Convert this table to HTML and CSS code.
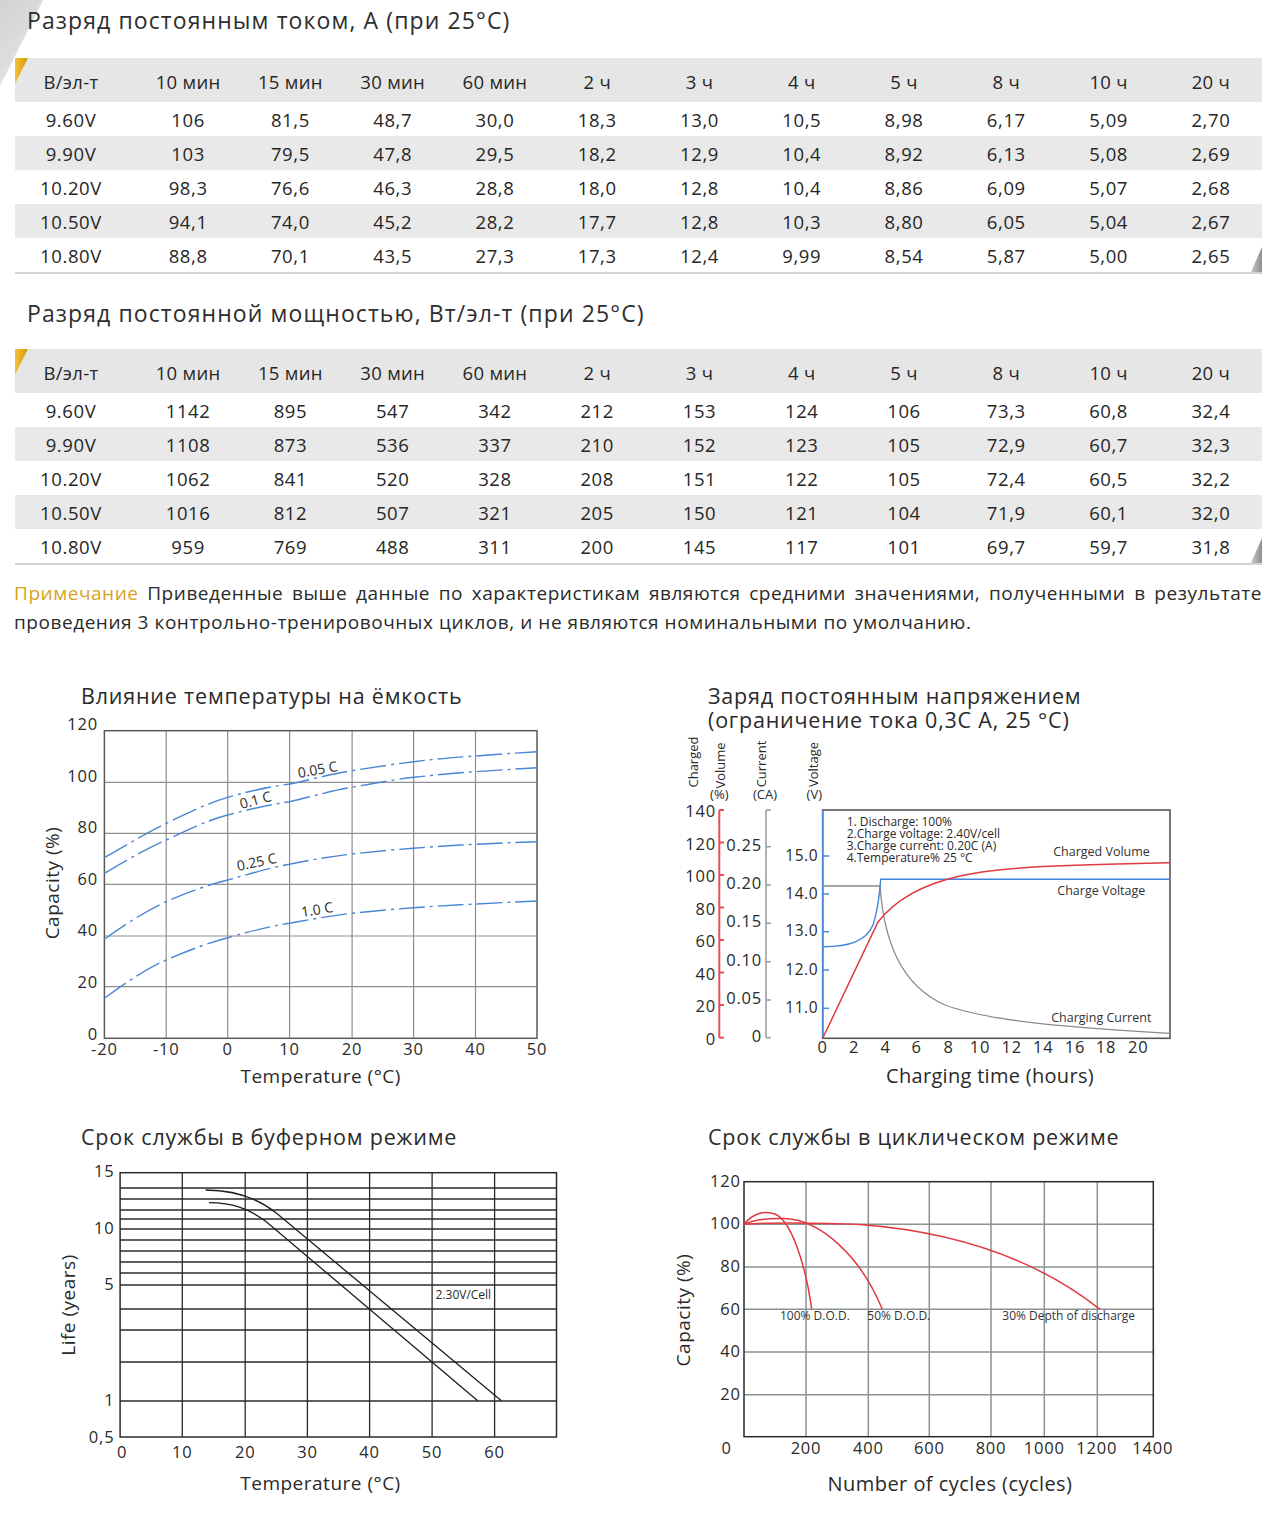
FILE: index.html
```html
<!DOCTYPE html>
<html lang="ru">
<head>
<meta charset="utf-8">
<title>Характеристики разряда</title>
<link rel="stylesheet" href="styles.css">
</head>
<body>
<div class="page">
  <div class="corner"></div>

  <section class="spec">
    <h2 class="spec-title first">Разряд постоянным током, А (при 25°С)</h2>
    <div class="table">
      <div class="row head"><span>В/эл-т</span><span>10 мин</span><span>15 мин</span><span>30 мин</span><span>60 мин</span><span>2 ч</span><span>3 ч</span><span>4 ч</span><span>5 ч</span><span>8 ч</span><span>10 ч</span><span>20 ч</span></div>
      <div class="row"><span>9.60V</span><span>106</span><span>81,5</span><span>48,7</span><span>30,0</span><span>18,3</span><span>13,0</span><span>10,5</span><span>8,98</span><span>6,17</span><span>5,09</span><span>2,70</span></div>
      <div class="row alt"><span>9.90V</span><span>103</span><span>79,5</span><span>47,8</span><span>29,5</span><span>18,2</span><span>12,9</span><span>10,4</span><span>8,92</span><span>6,13</span><span>5,08</span><span>2,69</span></div>
      <div class="row"><span>10.20V</span><span>98,3</span><span>76,6</span><span>46,3</span><span>28,8</span><span>18,0</span><span>12,8</span><span>10,4</span><span>8,86</span><span>6,09</span><span>5,07</span><span>2,68</span></div>
      <div class="row alt"><span>10.50V</span><span>94,1</span><span>74,0</span><span>45,2</span><span>28,2</span><span>17,7</span><span>12,8</span><span>10,3</span><span>8,80</span><span>6,05</span><span>5,04</span><span>2,67</span></div>
      <div class="row"><span>10.80V</span><span>88,8</span><span>70,1</span><span>43,5</span><span>27,3</span><span>17,3</span><span>12,4</span><span>9,99</span><span>8,54</span><span>5,87</span><span>5,00</span><span>2,65</span></div>
    </div>

    <h2 class="spec-title second">Разряд постоянной мощностью, Вт/эл-т (при 25°С)</h2>
    <div class="table">
      <div class="row head"><span>В/эл-т</span><span>10 мин</span><span>15 мин</span><span>30 мин</span><span>60 мин</span><span>2 ч</span><span>3 ч</span><span>4 ч</span><span>5 ч</span><span>8 ч</span><span>10 ч</span><span>20 ч</span></div>
      <div class="row"><span>9.60V</span><span>1142</span><span>895</span><span>547</span><span>342</span><span>212</span><span>153</span><span>124</span><span>106</span><span>73,3</span><span>60,8</span><span>32,4</span></div>
      <div class="row alt"><span>9.90V</span><span>1108</span><span>873</span><span>536</span><span>337</span><span>210</span><span>152</span><span>123</span><span>105</span><span>72,9</span><span>60,7</span><span>32,3</span></div>
      <div class="row"><span>10.20V</span><span>1062</span><span>841</span><span>520</span><span>328</span><span>208</span><span>151</span><span>122</span><span>105</span><span>72,4</span><span>60,5</span><span>32,2</span></div>
      <div class="row alt"><span>10.50V</span><span>1016</span><span>812</span><span>507</span><span>321</span><span>205</span><span>150</span><span>121</span><span>104</span><span>71,9</span><span>60,1</span><span>32,0</span></div>
      <div class="row"><span>10.80V</span><span>959</span><span>769</span><span>488</span><span>311</span><span>200</span><span>145</span><span>117</span><span>101</span><span>69,7</span><span>59,7</span><span>31,8</span></div>
    </div>
  </section>

  <p class="note"><span class="note-label">Примечание</span> Приведенные выше данные по характеристикам являются средними значениями, полученными в результате проведения 3 контрольно-тренировочных циклов, и не являются номинальными по умолчанию.</p>

  <section class="charts">
    <figure class="chart left top">
      <h3 class="chart-title">Влияние температуры на ёмкость</h3>
      <svg class="plot" width="640" height="411" viewBox="0 709 640 411">
        <g class="grid-grey">
          <line x1="166.2" y1="730.7" x2="166.2" y2="1038.3"/>
          <line x1="227.7" y1="730.7" x2="227.7" y2="1038.3"/>
          <line x1="289.6" y1="730.7" x2="289.6" y2="1038.3"/>
          <line x1="352.1" y1="730.7" x2="352.1" y2="1038.3"/>
          <line x1="413.6" y1="730.7" x2="413.6" y2="1038.3"/>
          <line x1="475.5" y1="730.7" x2="475.5" y2="1038.3"/>
          <line x1="104.4" y1="782.3" x2="537" y2="782.3"/>
          <line x1="104.4" y1="833.3" x2="537" y2="833.3"/>
          <line x1="104.4" y1="884.3" x2="537" y2="884.3"/>
          <line x1="104.4" y1="936" x2="537" y2="936"/>
          <line x1="104.4" y1="986.7" x2="537" y2="986.7"/>
        </g>
        <rect class="frame-grey" x="104.4" y="730.7" width="432.6" height="307.6"/>
        <g class="num yl">
          <text x="98" y="725">120</text>
          <text x="98" y="777">100</text>
          <text x="98" y="828">80</text>
          <text x="98" y="880">60</text>
          <text x="98" y="931">40</text>
          <text x="98" y="983">20</text>
          <text x="98" y="1035">0</text>
        </g>
        <g class="num xl">
          <text x="104.4" y="1050">-20</text>
          <text x="166.2" y="1050">-10</text>
          <text x="227.7" y="1050">0</text>
          <text x="289.6" y="1050">10</text>
          <text x="352.1" y="1050">20</text>
          <text x="413.6" y="1050">30</text>
          <text x="475.5" y="1050">40</text>
          <text x="537" y="1050">50</text>
        </g>
        <text class="axis-title" x="320.7" y="1078">Temperature (°C)</text>
        <text class="axis-title" x="51.7" y="883" transform="rotate(-90 51.7 883)">Capacity (%)</text>
        <g class="dashdot">
          <path d="M104.4 857.7 C130 843, 148 832, 166.2 823.3 C190 812, 208 803, 227.7 797.3 C250 791, 268 787, 289.6 784 C310 780, 330 774, 352.1 770.7 C375 767, 395 764, 413.6 761.7 C435 759, 455 757.5, 475.5 756 C495 754.5, 515 753, 537 751.7"/>
          <path d="M104.4 873.3 C130 858, 148 848, 166.2 840 C190 829, 208 820, 227.7 815 C250 809, 268 805, 289.6 801.7 C310 797, 330 791, 352.1 787.3 C375 783, 395 779.5, 413.6 777.3 C435 775, 455 773, 475.5 771.7 C495 770.5, 515 769, 537 767.7"/>
          <path d="M104.4 939.3 C128 922, 148 910, 166.2 901.7 C188 892, 208 885, 227.7 880 C250 874, 268 868, 289.6 864.3 C310 860, 330 856.5, 352.1 854 C375 851.5, 395 849.5, 413.6 848.3 C435 846.5, 455 845.2, 475.5 844.3 C495 843.3, 515 842.4, 537 841.7"/>
          <path d="M104.4 998.3 C128 981, 148 968, 166.2 960 C188 950.5, 208 943, 227.7 937.7 C250 931.5, 268 926.5, 289.6 923.3 C310 919.5, 330 915.7, 352.1 913.3 C375 911, 395 909, 413.6 907.7 C435 906.2, 455 905, 475.5 904 C495 903, 515 901.9, 537 901"/>
        </g>
        <g class="curve-label">
          <text x="298.7" y="778" transform="rotate(-10 298.7 778)">0.05 C</text>
          <text x="241.3" y="809" transform="rotate(-15 241.3 809)">0.1 C</text>
          <text x="238" y="871" transform="rotate(-12 238 871)">0.25 C</text>
          <text x="302" y="917" transform="rotate(-9 302 917)">1.0 C</text>
        </g>
      </svg>
    </figure>

    <figure class="chart right top">
      <h3 class="chart-title">Заряд постоянным напряжением<br>(ограничение тока 0,3С А, 25 °С)</h3>
      <svg class="plot" width="640" height="387" viewBox="640 733 640 387">
        <g class="small-axis">
          <text x="693" y="762" transform="rotate(-90 693 762)">Charged</text>
          <text x="719.7" y="765.5" transform="rotate(-90 719.7 765.5)">Volume</text>
          <text x="761.3" y="764" transform="rotate(-90 761.3 764)">Current</text>
          <text x="813" y="764.5" transform="rotate(-90 813 764.5)">Voltage</text>
          <text x="719.3" y="795">(%)</text>
          <text x="765" y="795">(CA)</text>
          <text x="814.3" y="795">(V)</text>
        </g>
        <g class="axis-red">
          <line x1="719.3" y1="810" x2="719.3" y2="1037.7"/>
          <line x1="719.3" y1="810" x2="724" y2="810"/>
          <line x1="719.3" y1="842.5" x2="724" y2="842.5"/>
          <line x1="719.3" y1="875" x2="724" y2="875"/>
          <line x1="719.3" y1="907.5" x2="724" y2="907.5"/>
          <line x1="719.3" y1="940" x2="724" y2="940"/>
          <line x1="719.3" y1="972.5" x2="724" y2="972.5"/>
          <line x1="719.3" y1="1005" x2="724" y2="1005"/>
          <line x1="719.3" y1="1037.7" x2="724" y2="1037.7"/>
        </g>
        <g class="num yl">
          <text x="716" y="812">140</text>
          <text x="716" y="844.5">120</text>
          <text x="716" y="877">100</text>
          <text x="716" y="909.5">80</text>
          <text x="716" y="942">60</text>
          <text x="716" y="974.5">40</text>
          <text x="716" y="1007">20</text>
          <text x="716" y="1039.7">0</text>
        </g>
        <g class="axis-grey">
          <line x1="766" y1="810" x2="766" y2="1037.7"/>
          <line x1="766" y1="810" x2="771" y2="810"/>
          <line x1="766" y1="846.7" x2="771" y2="846.7"/>
          <line x1="766" y1="885" x2="771" y2="885"/>
          <line x1="766" y1="923.3" x2="771" y2="923.3"/>
          <line x1="766" y1="961.7" x2="771" y2="961.7"/>
          <line x1="766" y1="1000" x2="771" y2="1000"/>
          <line x1="766" y1="1037.7" x2="771" y2="1037.7"/>
        </g>
        <g class="num yl">
          <text x="762" y="845.7">0.25</text>
          <text x="762" y="884">0.20</text>
          <text x="762" y="922.3">0.15</text>
          <text x="762" y="960.7">0.10</text>
          <text x="762" y="999">0.05</text>
          <text x="762" y="1036.7">0</text>
        </g>
        <rect class="frame-dark" x="822.7" y="810" width="347.3" height="228.3"/>
        <g class="axis-blue">
          <line x1="822.7" y1="810" x2="822.7" y2="1038.3"/>
          <line x1="822.7" y1="856" x2="829" y2="856"/>
          <line x1="822.7" y1="894" x2="829" y2="894"/>
          <line x1="822.7" y1="931.7" x2="829" y2="931.7"/>
          <line x1="822.7" y1="970" x2="829" y2="970"/>
          <line x1="822.7" y1="1008.3" x2="829" y2="1008.3"/>
        </g>
        <g class="num yl sm">
          <text x="818" y="856">15.0</text>
          <text x="818" y="894">14.0</text>
          <text x="818" y="931.7">13.0</text>
          <text x="818" y="970">12.0</text>
          <text x="818" y="1008.3">11.0</text>
        </g>
        <g class="num xl">
          <text x="822.7" y="1048.3">0</text>
          <text x="854" y="1048.3">2</text>
          <text x="885.7" y="1048.3">4</text>
          <text x="916.7" y="1048.3">6</text>
          <text x="948.7" y="1048.3">8</text>
          <text x="980" y="1048.3">10</text>
          <text x="1011.7" y="1048.3">12</text>
          <text x="1043.3" y="1048.3">14</text>
          <text x="1075" y="1048.3">16</text>
          <text x="1106" y="1048.3">18</text>
          <text x="1138.3" y="1048.3">20</text>
        </g>
        <text class="axis-title lg" x="990" y="1077.3">Charging time (hours)</text>
        <g class="note-lines">
          <text x="846.7" y="822.7">1. Discharge: 100%</text>
          <text x="846.7" y="834.5">2.Charge voltage: 2.40V/cell</text>
          <text x="846.7" y="846.3">3.Charge current: 0.20C (A)</text>
          <text x="846.7" y="858.3">4.Temperature% 25 °C</text>
        </g>
        <g class="series-label">
          <text x="1101.5" y="852.7">Charged Volume</text>
          <text x="1101.3" y="892">Charge Voltage</text>
          <text x="1101.3" y="1018.3">Charging Current</text>
        </g>
        <path class="line-grey" d="M822.7 886 L880 886 C884 940, 900 985, 945 1005 C990 1022, 1080 1028, 1170 1033.3"/>
        <path class="line-blue" d="M822.7 946.7 C850 946.5, 866 941, 873 925 C877 913, 879.5 896, 880.7 879.3 L1170 879.3"/>
        <path class="line-red" d="M822.7 1038.3 L878 922 C895 900, 920 885, 960 876 C1000 867, 1060 865, 1170 862.7"/>
      </svg>
    </figure>

    <figure class="chart left bottom">
      <h3 class="chart-title">Срок службы в буферном режиме</h3>
      <svg class="plot" width="640" height="360" viewBox="0 1150 640 360">
        <g class="grid-black">
          <line x1="182.3" y1="1172.7" x2="182.3" y2="1437"/>
          <line x1="245.2" y1="1172.7" x2="245.2" y2="1437"/>
          <line x1="307.4" y1="1172.7" x2="307.4" y2="1437"/>
          <line x1="369.6" y1="1172.7" x2="369.6" y2="1437"/>
          <line x1="432.1" y1="1172.7" x2="432.1" y2="1437"/>
          <line x1="494.6" y1="1172.7" x2="494.6" y2="1437"/>
          <line x1="120.1" y1="1188" x2="556.5" y2="1188"/>
          <line x1="120.1" y1="1199" x2="556.5" y2="1199"/>
          <line x1="120.1" y1="1210" x2="556.5" y2="1210"/>
          <line x1="120.1" y1="1219" x2="556.5" y2="1219"/>
          <line x1="120.1" y1="1229" x2="556.5" y2="1229"/>
          <line x1="120.1" y1="1240" x2="556.5" y2="1240"/>
          <line x1="120.1" y1="1251" x2="556.5" y2="1251"/>
          <line x1="120.1" y1="1262" x2="556.5" y2="1262"/>
          <line x1="120.1" y1="1273" x2="556.5" y2="1273"/>
          <line x1="120.1" y1="1285" x2="556.5" y2="1285"/>
          <line x1="120.1" y1="1309" x2="556.5" y2="1309"/>
          <line x1="120.1" y1="1330" x2="556.5" y2="1330"/>
          <line x1="120.1" y1="1362" x2="556.5" y2="1362"/>
          <line x1="120.1" y1="1401" x2="556.5" y2="1401"/>
        </g>
        <rect class="frame-black" x="120.1" y="1172.7" width="436.4" height="264.3"/>
        <g class="num yl">
          <text x="114.4" y="1172.3">15</text>
          <text x="114.4" y="1229.3">10</text>
          <text x="114.4" y="1285">5</text>
          <text x="114.4" y="1400.7">1</text>
          <text x="114.4" y="1437.5">0,5</text>
        </g>
        <g class="num xl">
          <text x="122" y="1453">0</text>
          <text x="182.3" y="1453">10</text>
          <text x="245.2" y="1453">20</text>
          <text x="307.4" y="1453">30</text>
          <text x="369.6" y="1453">40</text>
          <text x="432.1" y="1453">50</text>
          <text x="494.6" y="1453">60</text>
        </g>
        <text class="axis-title" x="320.5" y="1485">Temperature (°C)</text>
        <text class="axis-title" x="68.4" y="1305" transform="rotate(-90 68.4 1305)">Life (years)</text>
        <path class="line-black" d="M205.6 1190 C232 1190, 255 1196, 276.6 1213.3 L501.4 1400.7"/>
        <path class="line-black" d="M209 1202.7 C232 1203, 248 1208, 266 1221.5 L477.7 1400.7"/>
        <text class="chart-note" x="435.5" y="1296">2.30V/Cell</text>
      </svg>
    </figure>

    <figure class="chart right bottom">
      <h3 class="chart-title">Срок службы в циклическом режиме</h3>
      <svg class="plot" width="640" height="360" viewBox="640 1150 640 360">
        <g class="grid-cool">
          <line x1="806" y1="1181.7" x2="806" y2="1436.7"/>
          <line x1="868.3" y1="1181.7" x2="868.3" y2="1436.7"/>
          <line x1="929.3" y1="1181.7" x2="929.3" y2="1436.7"/>
          <line x1="991" y1="1181.7" x2="991" y2="1436.7"/>
          <line x1="1044.3" y1="1181.7" x2="1044.3" y2="1436.7"/>
          <line x1="1097.3" y1="1181.7" x2="1097.3" y2="1436.7"/>
          <line x1="744" y1="1224.3" x2="1153.3" y2="1224.3"/>
          <line x1="744" y1="1267" x2="1153.3" y2="1267"/>
          <line x1="744" y1="1309.3" x2="1153.3" y2="1309.3"/>
          <line x1="744" y1="1352" x2="1153.3" y2="1352"/>
          <line x1="744" y1="1394.7" x2="1153.3" y2="1394.7"/>
        </g>
        <rect class="frame-black" x="744" y="1181.7" width="409.3" height="255"/>
        <g class="num yl">
          <text x="740.7" y="1181.7">120</text>
          <text x="740.7" y="1224.3">100</text>
          <text x="740.7" y="1267.3">80</text>
          <text x="740.7" y="1310">60</text>
          <text x="740.7" y="1352.3">40</text>
          <text x="740.7" y="1395">20</text>
        </g>
        <g class="num xl">
          <text x="726.7" y="1449">0</text>
          <text x="806" y="1449">200</text>
          <text x="868.3" y="1449">400</text>
          <text x="929.3" y="1449">600</text>
          <text x="991" y="1449">800</text>
          <text x="1044.3" y="1449">1000</text>
          <text x="1096.7" y="1449">1200</text>
          <text x="1152.7" y="1449">1400</text>
        </g>
        <text class="axis-title lg wide" x="950" y="1485">Number of cycles (cycles)</text>
        <text class="axis-title" x="683" y="1310" transform="rotate(-90 683 1310)">Capacity (%)</text>
        <path class="line-red" d="M744 1224.3 C752 1214, 764 1210, 775 1214 C790 1220, 805 1260, 811.7 1309.3"/>
        <path class="line-red" d="M744 1224.3 C755 1219, 768 1218, 785 1218.5 C820 1220, 860 1255, 882.3 1309.3"/>
        <path class="line-red" d="M744 1224.3 C760 1222.5, 820 1222.5, 860 1224.5 C960 1232, 1040 1262, 1100 1309.3"/>
        <g class="chart-note">
          <text x="780" y="1317">100% D.O.D.</text>
          <text x="867.3" y="1317">50% D.O.D.</text>
          <text x="1002.3" y="1317">30% Depth of discharge</text>
        </g>
      </svg>
    </figure>
  </section>
</div>
</body>
</html>
```

FILE: styles.css
```css
* { box-sizing: border-box; }

html, body {
  margin: 0;
  padding: 0;
  background: #ffffff;
}

body {
  width: 1280px;
  font-family: "Open Sans", "Noto Sans", "DejaVu Sans", sans-serif;
  color: #2a2a2a;
}

.page {
  position: relative;
  width: 1280px;
  min-height: 1524px;
}

.corner {
  position: absolute;
  left: 0;
  top: 0;
  width: 43px;
  height: 86px;
  background: linear-gradient(135deg, #d2d2d2, #e8e8e8);
  clip-path: polygon(0 0, 100% 0, 0 100%);
}

/* ---------- tables ---------- */
.spec {
  position: relative;
  padding: 0 18px 0 15px;
}

.spec-title {
  margin: 0;
  padding-left: 12px;
  font-size: 23px;
  font-weight: 400;
  line-height: 40px;
  color: #2e2e2e;
  letter-spacing: 1.1px;
}

.spec-title.first { margin-bottom: 18px; }
.spec-title.second { margin: 19px 0 16px; }

.table {
  position: relative;
  border-bottom: 2px solid #d4d4d4;
}

.table::before {
  content: "";
  position: absolute;
  left: 0;
  top: 0;
  width: 13px;
  height: 26px;
  background: linear-gradient(90deg, #f2c23a, #d59b06);
  clip-path: polygon(0 0, 100% 0, 0 100%);
}

.table::after {
  content: "";
  position: absolute;
  right: 0;
  bottom: 0;
  width: 11px;
  height: 25px;
  background: linear-gradient(90deg, #c8c8c8, #8f8f8f);
  clip-path: polygon(100% 0, 100% 100%, 0 100%);
}

.row {
  display: grid;
  grid-template-columns: 122px repeat(11, 1fr);
  align-items: center;
  height: 34px;
  font-size: 18.5px;
  letter-spacing: 0.6px;
  text-align: center;
  color: #262626;
}

.row > span:first-child { padding-right: 10px; }

.row.head {
  height: 44px;
  padding-top: 2px;
  background: #e6e6e6;
  letter-spacing: 0.3px;
}

.row.alt { background: #e9e9e9; }

/* ---------- note ---------- */
.note {
  margin: 14px 18px 0 14px;
  font-size: 19px;
  line-height: 29px;
  text-align: justify;
  color: #2a2a2a;
  letter-spacing: 0.55px;
}

.note-label { color: #d9a21e; }

/* ---------- charts ---------- */
.charts {
  display: grid;
  grid-template-columns: 640px 640px;
  margin-top: 43px;
}

.chart { margin: 0; }

.chart-title {
  margin: 0;
  font-size: 21.5px;
  font-weight: 400;
  line-height: 24px;
  color: #2a2a2a;
  letter-spacing: 0.8px;
  padding-top: 4px;
  padding-bottom: 1px;
}

.chart.left .chart-title { padding-left: 81px; }
.chart.right .chart-title { padding-left: 68px; }
.chart.bottom .chart-title { padding-top: 5px; padding-bottom: 1px; }

.plot { display: block; }

.plot text { fill: #2a2a2a; }
.plot text:not([transform]) { transform: translateY(-0.09em); }

.num { font-size: 16.5px; letter-spacing: 0.8px; }
.num.sm { font-size: 15.5px; letter-spacing: 0.5px; }
.yl text { text-anchor: end; dominant-baseline: central; }
.xl text { text-anchor: middle; dominant-baseline: central; }

.axis-title {
  font-size: 19px;
  letter-spacing: 0.5px;
  text-anchor: middle;
  dominant-baseline: central;
}
.axis-title.lg { font-size: 20px; letter-spacing: 0.3px; }
.axis-title.wide { letter-spacing: 0.45px; }

.grid-grey line { stroke: #8e8e8e; stroke-width: 1.2; }
.frame-grey { fill: none; stroke: #5a5a5a; stroke-width: 1.5; }

.dashdot path {
  fill: none;
  stroke: #4a86d6;
  stroke-width: 1.4;
  stroke-dasharray: 26 5 3 5;
}

.curve-label text { font-size: 14px; }

.small-axis text {
  font-size: 13px;
  text-anchor: middle;
  dominant-baseline: central;
}

.axis-red line { stroke: #ea4d55; stroke-width: 2; }
.axis-grey line { stroke: #9a9a9a; stroke-width: 1.5; }
.axis-blue line { stroke: #4a8ad8; stroke-width: 1.5; }
.frame-dark { fill: none; stroke: #555555; stroke-width: 1.6; }

.note-lines text {
  font-size: 12px;
  dominant-baseline: central;
}

.series-label text {
  font-size: 12.5px;
  text-anchor: middle;
  dominant-baseline: central;
  fill: #333333;
}

.line-grey { fill: none; stroke: #8a8a8a; stroke-width: 1.3; }
.line-blue { fill: none; stroke: #3f86d8; stroke-width: 1.4; }
.line-red { fill: none; stroke: #e03a40; stroke-width: 1.5; }
.line-black { fill: none; stroke: #1e1e1e; stroke-width: 1.3; }

.grid-black line { stroke: #2a2a2a; stroke-width: 1.3; }
.frame-black { fill: none; stroke: #2a2a2a; stroke-width: 1.5; }

.grid-cool line { stroke: #8a9292; stroke-width: 1.5; }

.chart-note, .chart-note text {
  font-size: 12px;
  dominant-baseline: central;
  fill: #333333;
}
```
